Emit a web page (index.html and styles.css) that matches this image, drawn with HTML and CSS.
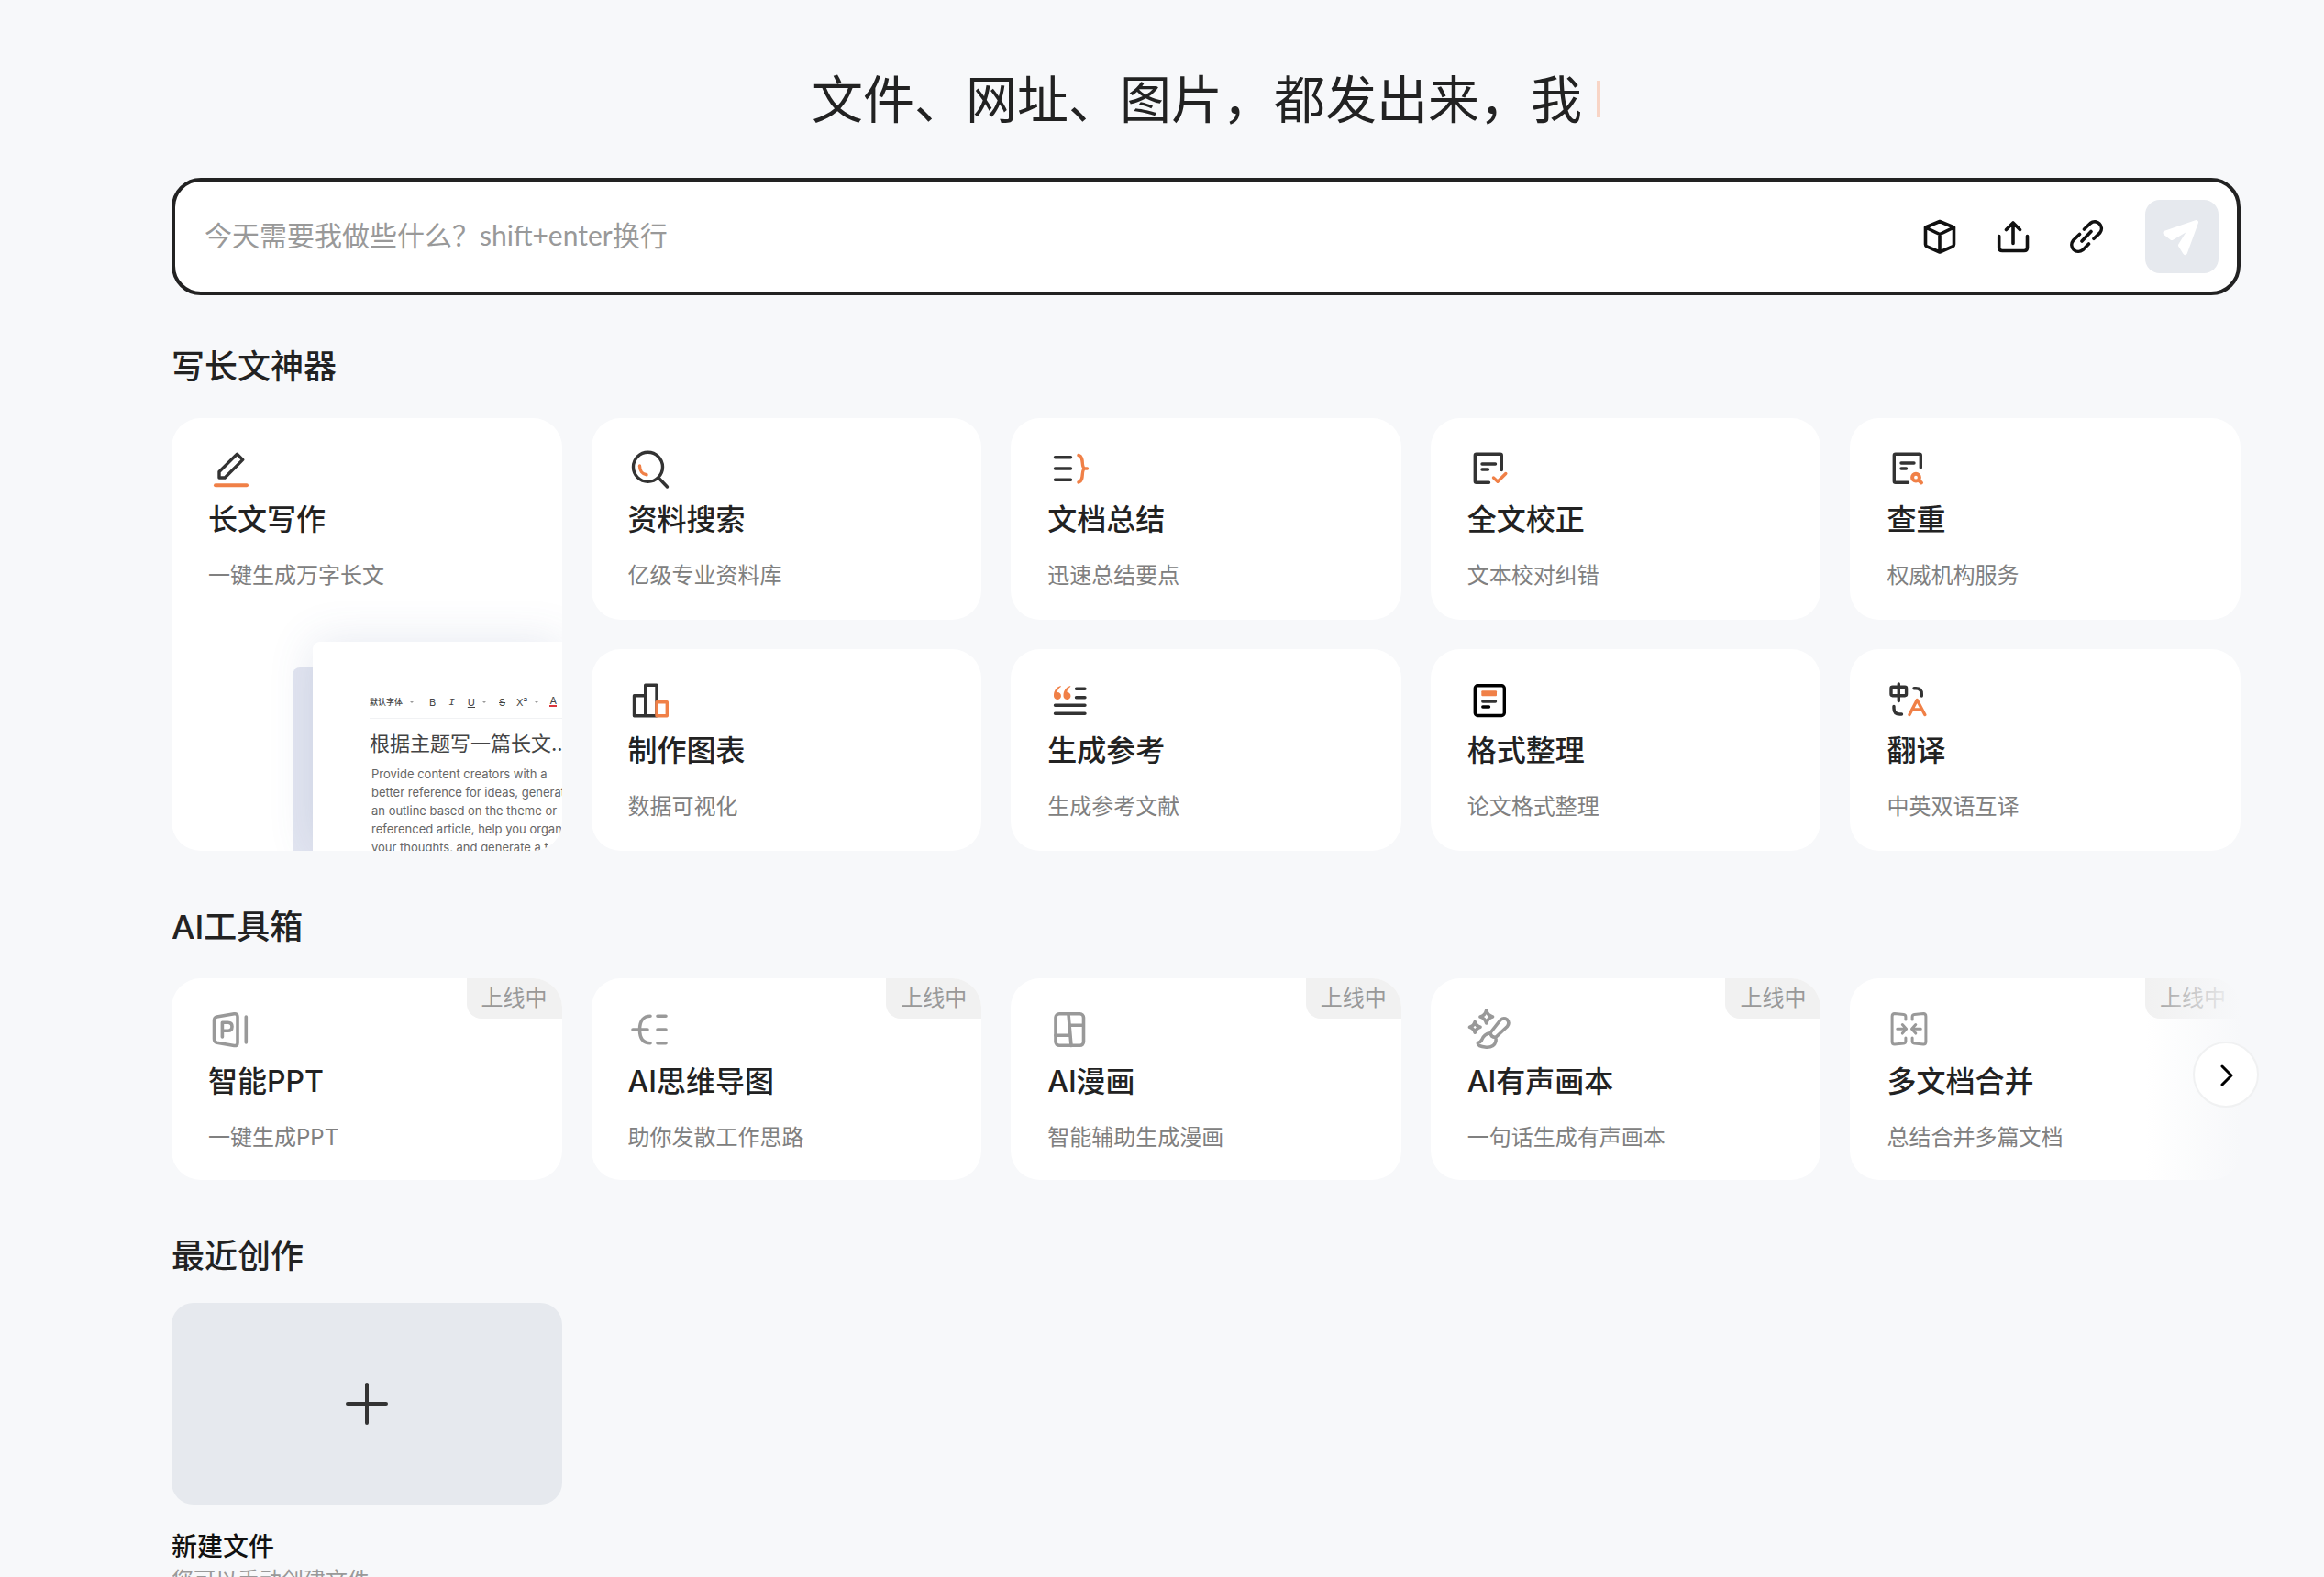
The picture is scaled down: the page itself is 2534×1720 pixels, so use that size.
FILE: index.html
```html
<!DOCTYPE html>
<html lang="zh-CN">
<head>
<meta charset="utf-8">
<title>AI 写作</title>
<link rel="stylesheet" href="styles.css">
</head>
<body>
<main class="page">
  <h1 class="slogan">文件、网址、图片，都发出来，我<span class="caret"></span></h1>

  <form class="prompt">
    <input class="prompt-input" type="text" aria-label="输入需求" placeholder="今天需要我做些什么？shift+enter换行">
    <div class="prompt-tools">
      <button type="button" class="tool" aria-label="知识库"><svg viewBox="0 0 40 40"><path d="M20 3.500L35.500 10V28.500Q35.500 30 34 30.800L20 37L6 30.800Q4.500 30 4.500 28.500V10ZM4.500 10L20 17.500L35.500 10M20 17.500V37"/></svg></button>
      <button type="button" class="tool" aria-label="上传文件"><svg viewBox="0 0 40 40"><path d="M4.700 19.500V32Q4.700 35.500 8.200 35.500H32Q35.500 35.500 35.500 32V19.500M20 27.500V5M12.500 12.500L20 5L27.500 12.500"/></svg></button>
      <button type="button" class="tool" aria-label="添加链接"><svg viewBox="0 0 40 40"><path d="M17.500 12L24.300 5.500A7.400 7.400 0 0 1 34.700 15.900L28 22.300M12.500 17.500L5.500 24.300A7.400 7.400 0 0 0 15.900 34.700L22.500 28M15 25L25 14.500"/></svg></button>
    </div>
    <button type="submit" class="send" aria-label="发送" disabled><svg viewBox="0 0 80 80"><path d="M55.500 24.500L22 36L29 41.500L52 28L38.500 49.500L43.500 57.500Z"/></svg></button>
  </form>

  <section class="section">
    <h2 class="section-title">写长文神器</h2>
    <div class="grid">
      <a class="card card-tall" href="#write">
        <svg class="icon" viewBox="0 0 48 48"><path d="M31.500 7.200L37.700 13.400L18.200 33H12V26.500Z"/><path class="accent thick" d="M8 41.300H42"/></svg>
        <h3 class="card-title">长文写作</h3>
        <p class="card-desc">一键生成万字长文</p>
        <div class="preview" aria-hidden="true">
          <div class="sheet-back"></div>
          <div class="sheet">
            <div class="sheet-head"></div>
            <div class="sheet-bar">
              <span class="sheet-font">默认字体</span><i class="drop"></i>
              <span class="b">B</span><span class="i">I</span><span class="u">U</span><i class="drop"></i>
              <span class="s">S</span><span class="x">X²</span><i class="drop"></i><span class="a">A</span>
            </div>
            <p class="sheet-title">根据主题写一篇长文...</p>
            <p class="sheet-text">Provide content creators with a<br>better reference for ideas, generate<br>an outline based on the theme or<br>referenced article, help you organize<br>your thoughts, and generate a t</p>
          </div>
        </div>
      </a>
      <a class="card" href="#search">
        <svg class="icon" viewBox="0 0 48 48"><circle cx="21.500" cy="21.300" r="16"/><path d="M33 33L42.500 43"/><path class="accent" d="M12.500 20C12.500 25.500 15.500 29.300 20 29.800"/></svg>
        <h3 class="card-title">资料搜索</h3>
        <p class="card-desc">亿级专业资料库</p>
      </a>
      <a class="card" href="#summary">
        <svg class="icon" viewBox="0 0 48 48"><path d="M8.500 10.700H25.500M8.500 23H25.500M8.500 35.300H25.500"/><path class="accent" d="M34 8.500C41 10.500 36 21.500 40.800 23C36 24.500 41 36 34 38M40.800 23H43.500"/></svg>
        <h3 class="card-title">文档总结</h3>
        <p class="card-desc">迅速总结要点</p>
      </a>
      <a class="card" href="#proof">
        <svg class="icon" viewBox="0 0 48 48"><path d="M37.300 24.500V8.800Q37.300 7.300 35.800 7.300H9.800Q8.300 7.300 8.300 8.800V36.800Q8.300 38.300 9.800 38.300H23.500M16 18H30.500M16 24H22.500"/><path class="accent" d="M28.500 33L33 37.200L41.800 28.500"/></svg>
        <h3 class="card-title">全文校正</h3>
        <p class="card-desc">文本校对纠错</p>
      </a>
      <a class="card" href="#check">
        <svg class="icon" viewBox="0 0 48 48"><path d="M37.300 22V8.800Q37.300 7.300 35.800 7.300H9.800Q8.300 7.300 8.300 8.800V36.800Q8.300 38.300 9.800 38.300H23.500M16 17H30M16 23H21.500"/><g class="accent thick"><circle cx="32" cy="32.700" r="3.900"/><path d="M35.500 36.200L38 38.500"/></g></svg>
        <h3 class="card-title">查重</h3>
        <p class="card-desc">权威机构服务</p>
      </a>
      <a class="card" href="#chart">
        <svg class="icon" viewBox="0 0 48 48"><path d="M18.700 18.700H6.500V40.700H31V7.300H18.700V40.700"/><rect class="accent" x="31" y="25.700" width="11.300" height="15"/></svg>
        <h3 class="card-title">制作图表</h3>
        <p class="card-desc">数据可视化</p>
      </a>
      <a class="card" href="#refs">
        <svg class="icon" viewBox="0 0 48 48"><path d="M31.500 11.300H41M31.500 20.700H41M8.500 29.300H41M8.500 38.300H41"/><path class="accent-fill" d="M14.600 8C9.500 9.500 7 13.500 7 18.500A4 4 0 1 0 11 15C10.800 12.500 12.300 10.500 14.800 9ZM25.100 8C20 9.500 17.500 13.500 17.500 18.500A4 4 0 1 0 21.500 15C21.300 12.500 22.800 10.500 25.300 9Z"/></svg>
        <h3 class="card-title">生成参考</h3>
        <p class="card-desc">生成参考文献</p>
      </a>
      <a class="card" href="#format">
        <svg class="icon" viewBox="0 0 48 48"><rect class="black" x="8.300" y="7.700" width="32" height="32.800" rx="3"/><rect class="accent-fill" x="15.300" y="13.300" width="16.700" height="6" rx="1"/><path d="M16.800 25H30.500"/><path class="black" d="M16.800 31H23.500"/></svg>
        <h3 class="card-title">格式整理</h3>
        <p class="card-desc">论文格式整理</p>
      </a>
      <a class="card" href="#translate">
        <svg class="icon" viewBox="0 0 48 48"><path d="M6.600 9.300H20Q21.600 9.300 21.600 10.900V17.100Q21.600 18.700 20 18.700H6.600Q5 18.700 5 17.100V10.900Q5 9.300 6.600 9.300ZM13.300 6V24.500M30 10.700H32Q38.300 10.700 38.300 17V19M8 30.500V32.500Q8 39 14.500 39H16.500"/><path class="accent" d="M25 39.500L33.300 23.500L41.800 39.500M28.500 34H38.500"/></svg>
        <h3 class="card-title">翻译</h3>
        <p class="card-desc">中英双语互译</p>
      </a>
    </div>
  </section>

  <section class="section">
    <h2 class="section-title">AI工具箱</h2>
    <div class="carousel">
      <div class="grid grid-muted">
        <a class="card" href="#ppt">
          <span class="badge">上线中</span>
          <svg class="icon" viewBox="0 0 48 48"><path d="M9.500 10L28.300 6.800Q32 6.300 32 10V38.500Q32 42 28.300 41.500L9.500 38.300Q6.500 37.500 6.500 34V14Q6.500 10.800 9.500 10ZM15.400 32V16.300H21.500Q26 16.300 26 20.800Q26 25.300 21.500 25.300H15.400M41.300 10V38"/></svg>
          <h3 class="card-title">智能PPT</h3>
          <p class="card-desc">一键生成PPT</p>
        </a>
        <a class="card" href="#mind">
          <span class="badge">上线中</span>
          <svg class="icon" viewBox="0 0 48 48"><path d="M24 9.300C17 9.300 12.500 14 12.500 24S17 38.700 24 38.700M5 24H21M32 9.300H41M32 24H41M32 38.700H41"/></svg>
          <h3 class="card-title">AI思维导图</h3>
          <p class="card-desc">助你发散工作思路</p>
        </a>
        <a class="card" href="#comic">
          <span class="badge">上线中</span>
          <svg class="icon" viewBox="0 0 48 48"><rect x="9" y="6.800" width="30.500" height="34.500" rx="4"/><path d="M23 7L26 41.500M24 19.300H39M9 30.300H25"/></svg>
          <h3 class="card-title">AI漫画</h3>
          <p class="card-desc">智能辅助生成漫画</p>
        </a>
        <a class="card" href="#audio">
          <span class="badge">上线中</span>
          <svg class="icon" viewBox="0 0 48 48"><path d="M20.700 3Q22 8.500 27.500 10Q22 11.500 20.700 17Q19.300 11.500 14 10Q19.300 8.500 20.700 3ZM8.200 15.500Q9.300 20 14 21.300Q9.300 22.700 8.200 27.200Q7 22.700 2.500 21.300Q7 20 8.200 15.500ZM25 27.500L36 13.500Q39.500 10.500 43.200 13Q46.500 16.500 43.500 20.500L30.700 32.500Q25.500 32 25 27.500ZM25 27.800Q18 28.500 15.500 35.500Q14 38 11.500 38.500Q10.500 42.500 20.500 43.200Q29 43.500 30.700 37.500Q31.500 35 30.700 32.500"/></svg>
          <h3 class="card-title">AI有声画本</h3>
          <p class="card-desc">一句话生成有声画本</p>
        </a>
        <a class="card" href="#merge">
          <span class="badge">上线中</span>
          <svg class="icon" viewBox="-2.300 0 48 48"><path class="fine" d="M18.600 13V10Q18.600 7.800 16.500 7.500L6.500 6.500Q3.800 6.500 3.800 9.500V37Q3.800 40 6.500 40L16.500 39Q18.600 38.700 18.600 36.500V33M25.800 13V10Q25.800 7.800 28 7.500L38 6.500Q40.600 6.500 40.600 9.500V37Q40.600 40 38 40L28 39Q25.800 38.700 25.800 36.500V33M9.500 23.300H19M15 18.500L19.300 23.300L15 28.100M35 23.300H25.500M29.500 18.500L25.200 23.300L29.500 28.100"/></svg>
          <h3 class="card-title">多文档合并</h3>
          <p class="card-desc">总结合并多篇文档</p>
        </a>
      </div>
      <div class="fade"></div>
      <button type="button" class="next" aria-label="下一页"><svg viewBox="0 0 24 24"><path d="M8 3L18 13L8 23"/></svg></button>
    </div>
  </section>

  <section class="section section-recent">
    <h2 class="section-title">最近创作</h2>
    <div class="grid">
      <div class="recent">
        <button type="button" class="new-file" aria-label="新建文件"><svg viewBox="0 0 48 48"><path d="M24 3V45M3 24H45"/></svg></button>
        <h3 class="recent-title">新建文件</h3>
        <p class="recent-desc">您可以手动创建文件</p>
      </div>
    </div>
  </section>
</main>
</body>
</html>
```
FILE: styles.css
```css
* { box-sizing: border-box; }

body {
  margin: 0;
  height: 100vh;
  overflow: hidden;
  background: #f7f8fa;
  color: #222;
  font-family: Inter, "Noto Sans CJK SC", sans-serif;
  font-size: 24px;
}

h1, h2, h3, p { margin: 0; }
a { color: inherit; text-decoration: none; }
button { border: 0; padding: 0; background: none; cursor: pointer; }

svg {
  display: block;
  fill: none;
  stroke-linecap: round;
  stroke-linejoin: round;
}

.page { padding: 65px 91px 0 187px; }

.slogan {
  display: flex;
  align-items: center;
  justify-content: center;
  gap: 16px;
  height: 80px;
  font-family: "Noto Sans CJK SC", sans-serif;
  font-size: 56px;
  font-weight: 400;
  line-height: 80px;
}
.caret { width: 4px; height: 40px; margin-top: 6px; background: #f8d5c6; }

.prompt {
  display: flex;
  align-items: center;
  margin-top: 49px;
  padding: 20px;
  padding-left: 32px;
  border: 4px solid #222;
  border-radius: 32px;
  background: #fff;
}
.prompt-input {
  flex: 1;
  min-width: 0;
  height: 48px;
  padding: 0 0 4px;
  border: 0;
  outline: 0;
  background: none;
  color: #222;
  font-family: Lato, "Noto Sans CJK SC", sans-serif;
  font-size: 30px;
  font-weight: 400;
}
.prompt-input::placeholder { color: #999; opacity: 1; }
.prompt-tools { display: flex; gap: 40px; margin-right: 44px; }
.tool svg { width: 40px; height: 40px; stroke: #111; stroke-width: 3.6; }
.send { border-radius: 16px; background: #e6e9ee; }
.send svg { width: 80px; height: 80px; fill: #fff; stroke: #fff; stroke-width: 5; }

.section { margin-top: 58px; }
.prompt + .section { margin-top: 53px; }
.section-title {
  margin-bottom: 31px;
  font-size: 36px;
  font-weight: 500;
  line-height: 50px;
}
.section-recent .section-title { margin-bottom: 26px; }

.grid {
  display: grid;
  grid-template-columns: repeat(5, minmax(0, 1fr));
  gap: 32px;
}

.card {
  position: relative;
  overflow: hidden;
  padding: 32px 40px 31px;
  border-radius: 32px;
  background: #fff;
}
.card-tall { grid-row: span 2; }
.card-title {
  margin: 9px 0 22px;
  font-size: 32px;
  font-weight: 500;
  line-height: 44px;
}
.card-desc { color: #808080; line-height: 34px; }
.grid-muted .card { padding-bottom: 29px; }
.grid-muted .card-title { margin-top: 11px; }

.icon { width: 48px; height: 48px; stroke: #333; stroke-width: 3.4; }
.icon .accent { stroke: #f08047; }
.icon .accent-fill { fill: #f08047; stroke: none; }
.icon .black { stroke: #000; }
.icon .thick { stroke-width: 4; }
.grid-muted .icon { stroke: #999; stroke-width: 3.6; }
.grid-muted .icon .fine { stroke-width: 3; }

.badge {
  position: absolute;
  top: 0;
  right: 0;
  padding: 0 16px;
  border-bottom-left-radius: 16px;
  background: #f1f1f1;
  color: #999;
  line-height: 44px;
}

.carousel { position: relative; }
.fade {
  position: absolute;
  top: 0;
  right: 0;
  bottom: 0;
  width: 104px;
  background: linear-gradient(to right, rgba(247, 248, 250, 0), #f7f8fa);
}
.next {
  position: absolute;
  top: 69px;
  right: -20px;
  display: grid;
  place-items: center;
  width: 72px;
  height: 72px;
  border: 2px solid #f0f1f2;
  border-radius: 50%;
  background: #fff;
}
.next svg { width: 24px; height: 24px; stroke: #000; stroke-width: 3; }

.preview {
  position: absolute;
  top: 244px;
  left: 132px;
  right: 0;
  bottom: 0;
}
.sheet-back {
  position: absolute;
  top: 28px;
  left: 0;
  width: 60px;
  bottom: 0;
  border-radius: 8px 0 0 0;
  background: #e3e6f1;
}
.sheet {
  position: relative;
  height: 100%;
  margin-left: 22px;
  border-radius: 8px 0 0 0;
  background: #fff;
  box-shadow: 0 0 50px rgba(70, 90, 150, 0.14);
  color: #444;
  white-space: nowrap;
  overflow: hidden;
}
.sheet-head { height: 40px; border-bottom: 1px solid #f1f2f4; }
.sheet-bar {
  display: flex;
  align-items: center;
  height: 44px;
  margin: 0 0 15px 62px;
  padding-top: 8px;
  border-bottom: 1px solid #f1f2f4;
  font-size: 11px;
  line-height: 12px;
}
.sheet-font { font-size: 9px; font-weight: 500; }
.drop {
  margin-left: 8px;
  border: 2px solid transparent;
  border-top-color: #999;
  border-bottom-width: 0;
}
.sheet-bar .b { margin-left: 17px; }
.sheet-bar .i { margin-left: 14px; font-family: "Liberation Mono", monospace; font-style: italic; }
.sheet-bar .u { margin-left: 14px; text-decoration: underline; }
.sheet-bar .s { margin-left: 14px; text-decoration: line-through; }
.sheet-bar .x { margin-left: 12px; }
.sheet-bar .a { margin-left: 12px; border-bottom: 2px solid #d9363e; line-height: 9px; }
.sheet-title { margin-left: 62px; font-size: 22px; line-height: 24px; }
.sheet-text {
  margin: 11px 0 0 64px;
  color: #666;
  font-size: 13px;
  line-height: 20px;
}

.new-file {
  display: grid;
  place-items: center;
  width: 100%;
  height: 220px;
  border-radius: 24px;
  background: #e6e9ee;
}
.new-file svg { width: 48px; height: 48px; stroke: #333; stroke-width: 4; }
.recent-title {
  margin-top: 26px;
  color: #111;
  font-size: 28px;
  font-weight: 500;
  line-height: 40px;
}
.recent-desc { color: #999; line-height: 34px; }
```
